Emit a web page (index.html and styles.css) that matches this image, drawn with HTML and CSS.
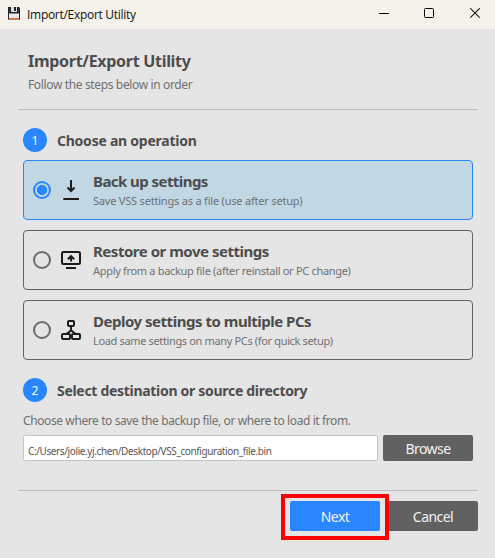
FILE: index.html
```html
<!DOCTYPE html>
<html lang="en">
<head>
<meta charset="utf-8">
<title>Import/Export Utility</title>
<link rel="stylesheet" href="styles.css">
</head>
<body>
<div class="window">
  <header class="titlebar">
    <svg class="app-icon" width="12" height="13" viewBox="0 0 12 13">
      <path d="M0 0h11l1 1v11.500H0z" fill="#25262c"/>
      <path d="M3 0h6v5H3z" fill="#d9dde2"/>
      <path d="M6 0h2v4H6z" fill="#25262c"/>
      <path d="M1 6.500h10V11H1z" fill="#e6e8ea"/>
      <path d="M1 11h10v1.300H1z" fill="#fb6535"/>
    </svg>
    <span class="titlebar-text">Import/Export Utility</span>
    <div class="controls">
      <svg width="10" height="11" viewBox="0 0 10 11"><path d="M0 5.500h10" stroke="#000"/></svg>
      <svg width="10" height="11" viewBox="0 0 10 11"><rect x=".5" y=".5" width="9" height="9" rx="1" fill="none" stroke="#000"/></svg>
      <svg class="close" width="10" height="11" viewBox="0 0 10 11"><path d="M.3.3l9.400 9.400M9.700.3L.3 9.700" stroke="#111" stroke-width="1.100"/></svg>
    </div>
  </header>
  <main class="content">
    <div class="intro">
      <h1 class="title">Import/Export Utility</h1>
      <p class="subtitle">Follow the steps below in order</p>
    </div>
    <section class="steps">
      <div class="step"><span class="badge">1</span><h2 class="step-title choose">Choose an operation</h2></div>
      <div class="options">
        <div class="option selected">
          <span class="radio"></span>
          <svg class="icon" width="22" height="22" viewBox="0 0 22 22" fill="none" stroke="#1c1c1c" stroke-width="2"><path d="M11 1v11M7.500 8.500l3.500 3.500 3.500-3.500M3.300 20h15.700"/></svg>
          <div class="option-text"><h3 class="option-title backup-title">Back up settings</h3><p class="option-note backup-note">Save VSS settings as a file (use after setup)</p></div>
        </div>
        <div class="option">
          <span class="radio"></span>
          <svg class="icon" width="22" height="22" viewBox="0 0 22 22" fill="none" stroke="#1c1c1c" stroke-width="2"><rect x="2" y="3" width="18" height="12" rx="1.500"/><path d="M11 12.500V7M7.800 10.300L11 7.200l3.200 3.100M6 19h10"/></svg>
          <div class="option-text"><h3 class="option-title">Restore or move settings</h3><p class="option-note restore-note">Apply from a backup file (after reinstall or PC change)</p></div>
        </div>
        <div class="option">
          <span class="radio"></span>
          <svg class="icon" width="22" height="22" viewBox="0 0 22 22" fill="none" stroke="#1c1c1c" stroke-width="2"><rect x="8" y="2" width="6" height="5" rx="1"/><rect x="2" y="15" width="8" height="5" rx="1"/><rect x="12" y="15" width="8" height="5" rx="1"/><path d="M11 7v4M6.500 15L11 11.200l4.500 3.800"/></svg>
          <div class="option-text"><h3 class="option-title">Deploy settings to multiple PCs</h3><p class="option-note">Load same settings on many PCs (for quick setup)</p></div>
        </div>
      </div>
      <div class="step second"><span class="badge">2</span><h2 class="step-title">Select destination or source directory</h2></div>
      <p class="hint">Choose where to save the backup file, or where to load it from.</p>
      <div class="path-row">
        <div class="path"><span>C:/Users/jolie.yj.chen/Desktop/VSS_configuration_file.bin</span></div>
        <button class="button browse">Browse</button>
      </div>
    </section>
    <footer class="actions">
      <div class="next-wrap"><button class="button next">Next</button></div>
      <button class="button">Cancel</button>
    </footer>
  </main>
</div>
</body>
</html>
```

FILE: styles.css
```css
*, *::after { box-sizing: border-box; }
body { margin: 0; background: #e5e5e5; font-family: "Noto Sans", sans-serif; color: #4d4d4d; }
h1, h2, h3, p { margin: 0; white-space: nowrap; }
svg { display: block; flex: none; }
.window { height: 558px; overflow: hidden; }
.titlebar { height: 29px; background: #f5f2eb; display: flex; align-items: center; padding: 0 15px 2px 8px; }
.titlebar-text { font: 12px/18px "Open Sans", sans-serif; letter-spacing: -.29px; color: #111; margin-left: 7px; padding-top: 2px; white-space: nowrap; }
.controls { display: flex; gap: 35px; margin-left: auto; }
.close { margin-left: 1px; }
.content { padding: 0 17px 0 18px; }
.intro { height: 81px; padding: 21px 0 0 10px; border-bottom: 1px solid #bebebe; }
.title { font-size: 16px; line-height: 22px; font-weight: 700; letter-spacing: -.29px; }
.subtitle { font-size: 12px; line-height: 18px; color: #707070; margin-top: 4px; letter-spacing: -.36px; }
.steps { padding: 18px 5px 0; }
.step { display: flex; align-items: center; height: 24px; gap: 10px; }
.badge { width: 24px; height: 24px; border-radius: 50%; background: #2a86ff; color: #f3f8ff; text-align: center; font-size: 12px; line-height: 25px; }
.step-title { font-size: 14px; line-height: 20px; font-weight: 700; padding-top: 1px; letter-spacing: -.3px; }
.choose { letter-spacing: -.24px; }
.options { margin-top: 8px; display: flex; flex-direction: column; gap: 10px; }
.option { height: 60px; border: 1px solid #636363; border-radius: 4px; display: flex; align-items: center; padding: 0 9px; }
.option.selected { border-color: #2a86ff; background: #c1d7e4; }
.radio { width: 18px; height: 18px; flex: none; border: 2px solid #6b6b6b; border-radius: 50%; }
.selected .radio { border-color: #2a86ff; background: radial-gradient(circle, #2a86ff 4.8px, transparent 5.3px); }
.icon { margin-left: 9px; }
.option-text { margin-left: 11px; padding-top: 1px; }
.option-title { font-size: 15px; line-height: 21px; font-weight: 700; letter-spacing: -.48px; }
.backup-title { letter-spacing: -.56px; }
.option-note { font-size: 11px; line-height: 18px; color: #707070; letter-spacing: -.35px; }
.backup-note { letter-spacing: -.2px; }
.restore-note { letter-spacing: -.31px; }
.second { margin-top: 18px; }
.hint { font-size: 12px; line-height: 18px; color: #707070; margin-top: 10px; letter-spacing: -.4px; }
.path-row { display: flex; gap: 5px; margin-top: 5px; }
.path { width: 355px; height: 26px; border: 1px solid #c4c4c4; border-radius: 2px; background: #fff; padding: 6px 4px 0; font-size: 10px; line-height: 18px; letter-spacing: -.39px; white-space: nowrap; color: #555; }
.button { width: 90px; height: 30px; border: 0; padding: 1px 0 0; border-radius: 2px; background: #616161; color: #f2f2f2; font: 14px/20px "Noto Sans", sans-serif; letter-spacing: -.55px; }
.browse { height: 26px; }
.actions { border-top: 1px solid #bebebe; margin-top: 29px; height: 68px; padding-top: 10px; display: flex; justify-content: flex-end; gap: 8px; }
.next-wrap { position: relative; height: 30px; }
.next-wrap::after { content: ""; position: absolute; left: -9px; top: -7px; width: 108px; height: 46px; border: 4px solid #f00; }
.next { background: #2a86ff; display: block; }
```
